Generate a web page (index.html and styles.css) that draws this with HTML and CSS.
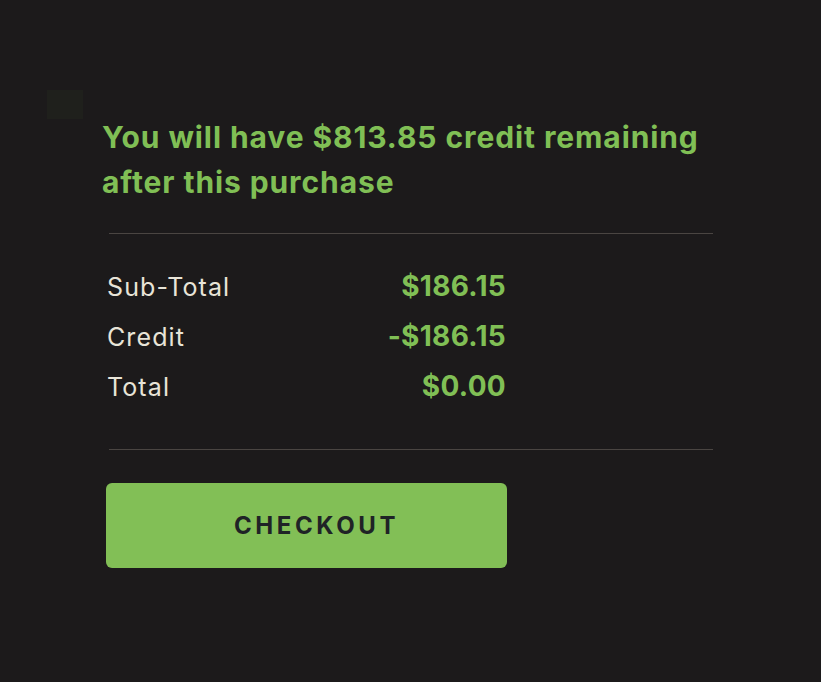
FILE: index.html
```html
<!DOCTYPE html>
<html>
<head>
<meta charset="utf-8">
<link rel="stylesheet" href="styles.css">
</head>
<body>
<div class="page">
  <div class="marker"></div>
  <div class="summary">
    <h2 class="notice">You will have $813.85 credit remaining<br>after this purchase</h2>
    <hr class="divider">
    <div class="rows">
      <div class="row"><span class="label">Sub-Total</span><span class="value">$186.15</span></div>
      <div class="row"><span class="label">Credit</span><span class="value">-$186.15</span></div>
      <div class="row"><span class="label">Total</span><span class="value">$0.00</span></div>
    </div>
    <hr class="divider">
    <button class="checkout">CHECKOUT</button>
  </div>
</div>
</body>
</html>
```
FILE: styles.css
```css
html, body {
  margin: 0;
  padding: 0;
  background: #1c1a1b;
  height: 100%;
}
.page {
  padding-top: 90px;
  font-family: Inter, "Open Sans", sans-serif;
}
.marker {
  width: 36px;
  height: 29px;
  margin-left: 47px;
  background: #1f201c;
}
.summary {
  padding-left: 106px;
  width: 607px;
}
.notice {
  margin: -4px 0 0 -4px;
  color: #80bf55;
  font-size: 30px;
  font-weight: 700;
  line-height: 45px;
  letter-spacing: 0.9px;
}
.divider {
  border: 0;
  height: 1px;
  background: #4a4542;
  margin: 0 0 0 3px;
}
.summary > .divider:first-of-type {
  margin-top: 28px;
}
.rows {
  display: flex;
  flex-direction: column;
  width: 399px;
  padding: 27px 0 38px 1px;
}
.row {
  display: flex;
  justify-content: space-between;
  align-items: baseline;
  height: 50px;
  line-height: 50px;
}
.label {
  color: #e8e4d8;
  font-size: 25px;
  font-weight: 400;
  letter-spacing: 1.1px;
}
.value {
  color: #80bf55;
  font-size: 28px;
  font-weight: 700;
  letter-spacing: 0.3px;
}
.checkout {
  margin-top: 33px;
  width: 401px;
  height: 85px;
  padding: 0 0 0 20px;
  border: 0;
  border-radius: 6px;
  background: #82bf56;
  color: #1f2326;
  font-family: Inter, sans-serif;
  font-size: 24px;
  font-weight: 700;
  letter-spacing: 3.6px;
  cursor: pointer;
}
```
